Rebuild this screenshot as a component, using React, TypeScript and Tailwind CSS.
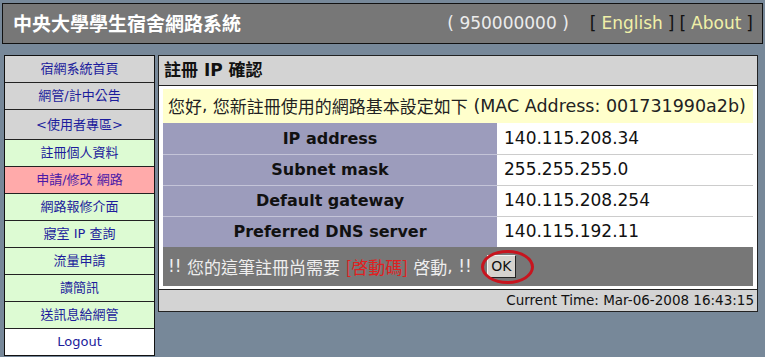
import React from "react";

const cjk = '"DejaVu Sans", Verdana, "Noto Sans CJK TC", sans-serif';
const han = '"Noto Sans CJK TC", sans-serif';

const navItems: { label: string; bg: string; h: string; color?: string; last?: boolean }[] = [
  { label: "宿網系統首頁", bg: "bg-[#d4d4d4]", h: "h-[27px]" },
  { label: "網管/計中公告", bg: "bg-[#d4d4d4]", h: "h-[27px]" },
  { label: "<使用者專區>", bg: "bg-[#d4d4d4]", h: "h-[30px]" },
  { label: "註冊個人資料", bg: "bg-[#ddfbd3]", h: "h-[27px]" },
  { label: "申請/修改 網路", bg: "bg-[#ffaaaa]", h: "h-[27px]", color: "text-[#4a1aa8]" },
  { label: "網路報修介面", bg: "bg-[#ddfbd3]", h: "h-[27px]" },
  { label: "寢室 IP 查詢", bg: "bg-[#ddfbd3]", h: "h-[27px]" },
  { label: "流量申請", bg: "bg-[#ddfbd3]", h: "h-[27px]" },
  { label: "讀簡訊", bg: "bg-[#ddfbd3]", h: "h-[27px]" },
  { label: "送訊息給網管", bg: "bg-[#ddfbd3]", h: "h-[27px]" },
  { label: "Logout", bg: "bg-white", h: "h-[26px]", last: true },
];

const rows = [
  ["IP address", "140.115.208.34"],
  ["Subnet mask", "255.255.255.0"],
  ["Default gateway", "140.115.208.254"],
  ["Preferred DNS server", "140.115.192.11"],
];

export default function App() {
  return (
    <div className="w-[765px] h-[357px] bg-[#778899] overflow-hidden" style={{ fontFamily: cjk }}>
      {/* header */}
      <div className="pt-[3px] px-[2px]">
        <div className="h-[41px] bg-[#777777] border border-[#111] flex items-center justify-between pl-[10px] pr-[9px]">
          <div className="text-[19px] font-semibold text-white" style={{ fontFamily: han }}>
            中央大學學生宿舍網路系統
          </div>
          <div className="flex items-center text-[17px]">
            <span className="text-[#ececec]">( 950000000 )</span>
            <span className="ml-[21px] text-[#111]">[</span>
            <span className="ml-[5px] text-[#f0f0a8]">English</span>
            <span className="ml-[5px] text-[#111]">]</span>
            <span className="ml-[5px] text-[#111]">[</span>
            <span className="ml-[5px] text-[#f0f0a8]">About</span>
            <span className="ml-[5px] text-[#111]">]</span>
          </div>
        </div>
      </div>

      <div className="flex mt-[11px]">
        {/* nav */}
        <div className="ml-[4px] w-[151px] border border-[#111] flex flex-col">
          {navItems.map((it) => (
            <div
              key={it.label}
              className={`${it.h} ${it.bg} ${it.last ? "" : "border-b border-[#222]"} flex items-center justify-center text-[13px] ${it.color ?? "text-[#1c1c9c]"}`}
            >
              {it.label}
            </div>
          ))}
        </div>

        {/* main */}
        <div className="ml-[3px] w-[600px] self-start border border-[#222] bg-white">
          <div className="h-[30px] bg-[#d3d3d3] border-b border-[#222] flex items-center pl-[5px] text-[17px] font-bold text-[#111]">
            註冊 IP 確認
          </div>
          <div className="px-[4px] pt-[3px] pb-[3px]">
            <div className="h-[34px] bg-[#ffffcc] flex items-center pl-[5px] text-[17px] text-[#222] whitespace-nowrap">
              <span style={{ fontFamily: han }}>您好</span>
              <span>,&nbsp;</span>
              <span style={{ fontFamily: han }}>您新註冊使用的網路基本設定如下</span>
              <span className="text-[17.5px]">&nbsp;(MAC Address: 001731990a2b)</span>
            </div>
            {rows.map(([k, v], i) => (
              <div key={k} className="flex h-[31px]">
                <div className={`w-[334px] bg-[#9c9cbc] flex items-center justify-center text-[16px] font-bold text-[#111] ${i === 0 ? "" : "border-t border-[#c4c4d8]"}`}>
                  {k}
                </div>
                <div className={`flex-1 bg-white flex items-center pl-[7px] text-[17px] text-[#111] ${i === 0 ? "" : "border-t border-[#cccccc]"}`}>
                  {v}
                </div>
              </div>
            ))}
            <div className="h-[39px] bg-[#777777] flex items-center pl-[5px] text-[17px] text-[#eeeeee] whitespace-nowrap">
              <span>!!&nbsp;</span>
              <span style={{ fontFamily: han }}>您的這筆註冊尚需要</span>
              <span>&nbsp;</span>
              <span className="text-[#e02020]" style={{ fontFamily: han }}>[啓動碼]</span>
              <span>&nbsp;</span>
              <span style={{ fontFamily: han }}>啓動</span>
              <span>, !!</span>
              <div className="relative ml-[15px]">
                <div className="w-[29px] h-[23px] bg-[#d6d3ce] border border-t-[#f4f4f4] border-l-[#f4f4f4] border-r-[#222] border-b-[#222] flex items-center justify-center text-[14px] text-[#111]">
                  OK
                </div>
                <div className="absolute left-[-6px] top-[-5px] w-[53px] h-[34px] rounded-[50%] border-[3px] border-[#c8141e]" />
              </div>
            </div>
          </div>
          <div className="h-[22px] bg-[#d3d3d3] border-t border-[#222] flex items-center justify-end pr-[3px] text-[13.5px] text-[#111]">
            Current Time: Mar-06-2008 16:43:15
          </div>
        </div>
      </div>
    </div>
  );
}
